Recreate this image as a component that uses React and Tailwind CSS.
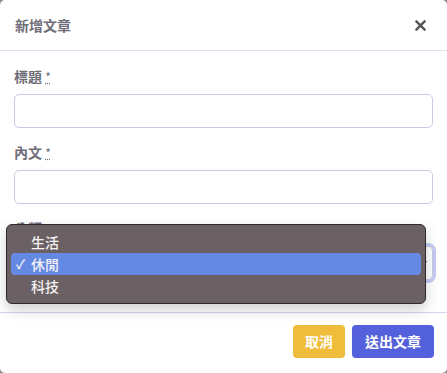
import React from 'react'

const font = { fontFamily: '"Noto Sans CJK TC", "Noto Sans", sans-serif' }

const Label = ({ children }) => (
  <label className='block h-5 mb-2 text-[14px] leading-5 font-bold text-[#6e6d78]'>
    {children}{' '}
    <abbr title='required' className='text-[12px] font-normal underline decoration-dotted'>*</abbr>
  </label>
)

const App = () => {
  const options = ['生活', '休閒', '科技']
  const selected = '休閒'

  return (
    <div className='w-[447px] h-[373px] bg-[#8a8a8a]' style={font}>
      <div className='relative w-full h-full bg-white rounded-[5px] flex flex-col'>
        {/* header */}
        <div className='h-[51px] px-[15px] flex items-center justify-between border-b border-[#e2dff0]'>
          <h2 className='text-[14px] font-bold text-[#6e6d78]'>新增文章</h2>
          <button className='text-[#555] pr-[6px]'>
            <svg width='11' height='11' viewBox='0 0 12 12'>
              <path d='M1.5 1.5 L10.5 10.5 M10.5 1.5 L1.5 10.5' stroke='currentColor' strokeWidth='2.6' strokeLinecap='round' />
            </svg>
          </button>
        </div>

        {/* body */}
        <div className='px-[14px] pt-[15px] pb-[32px] flex flex-col gap-[14px] border-b border-[#d6d3ea]'>
          <div>
            <Label>標題</Label>
            <input className='w-full h-[34px] rounded-[5px] border border-[#cdc9e4] outline-none' />
          </div>
          <div>
            <Label>內文</Label>
            <input className='w-full h-[34px] rounded-[5px] border border-[#cdc9e4] outline-none' />
          </div>
          <div>
            <Label>分類</Label>
            <div className='h-[34px] rounded-[5px] border border-[#cdc9e4] ring-[3px] ring-[#c4cbf3] flex items-center justify-end pr-[5px]'>
              <svg width='6' height='5' viewBox='0 0 6 5'>
                <path d='M0 0 L6 0 L3 5 Z' fill='#333' />
              </svg>
            </div>
          </div>
        </div>

        {/* footer */}
        <div className='flex justify-end gap-[7px] pt-[12px] pr-[13px]'>
          <button className='h-[33px] w-[52px] rounded-[4px] bg-[#efbd3b] text-white text-[14px] font-bold'>取消</button>
          <button className='h-[33px] w-[82px] rounded-[4px] bg-[#5461dc] text-white text-[14px] font-bold'>送出文章</button>
        </div>

        {/* native select menu */}
        <div className='absolute left-[6px] top-[224px] w-[420px] h-[80px] rounded-[6px] border border-[#2e2a2b] bg-[#6b6164] shadow-[0_6px_14px_rgba(0,0,0,0.18)] px-[4px] py-[6px]'>
          {options.map((opt) => (
            <div
              key={opt}
              className={`h-[22px] flex items-center rounded-[4px] text-[14px] font-medium text-[#f3f1f2] ${opt === selected ? 'bg-[#6489e3]' : ''}`}
            >
              <span className='w-[20px] pl-[5px] text-[13px]'>{opt === selected ? '✓' : ''}</span>
              <span>{opt}</span>
            </div>
          ))}
        </div>
      </div>
    </div>
  )
}

export default App
